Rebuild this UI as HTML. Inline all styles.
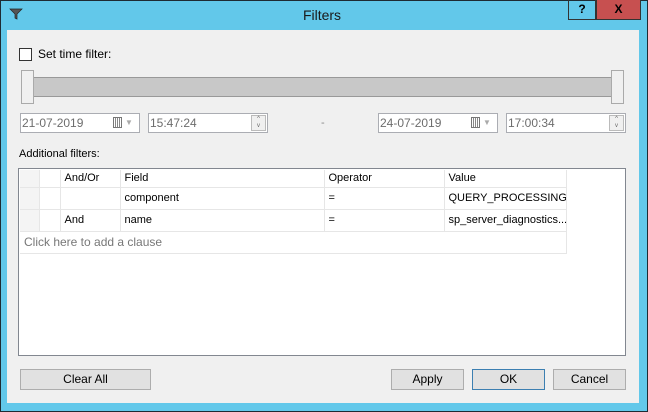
<!DOCTYPE html>
<html><head><style>
*{box-sizing:border-box;margin:0;padding:0}
body{width:648px;height:412px;overflow:hidden;background:#62c8ea;font-family:"Liberation Sans",sans-serif;font-size:11px;color:#000;position:relative}
.a{position:absolute}
.frame{left:0;top:0;width:648px;height:412px;border:1px solid #1e2b33}
.client{left:7px;top:30px;width:632px;height:373px;background:#f0f0f0}
.inp{background:#fff;border:1px solid #abadb3;height:20px;color:#6d6d6d;font-size:12px;line-height:18px;padding-left:1px}
.btn{background:#e1e1e1;border:1px solid #adadad;height:21px;text-align:center;line-height:19px;font-size:12px}
td{border-right:1px solid #e6e6e6;border-bottom:1px solid #e6e6e6;height:22px;line-height:20px;padding:0 0 0 4px;font-size:11px;white-space:nowrap;overflow:hidden}
tr.h td{height:17px;line-height:15px}
table{border-collapse:collapse;table-layout:fixed}
.cal{position:absolute;left:92px;top:3px;width:9px;height:11px;border:1px solid #777;background:repeating-linear-gradient(90deg,#fff 0 1px,#888 1px 2px)}
.arr{position:absolute;left:104px;top:0;color:#aaa;font-size:8px}
.spin{position:absolute;right:1px;top:1px;width:15px;height:16px;border:1px solid #bbb;background:#f0f0f0;font-size:6px;line-height:7px;text-align:center;color:#666}
</style></head><body>
<div class="a frame"></div>
<svg class="a" style="left:9px;top:8px" width="14" height="12" viewBox="0 0 14 12"><path d="M1 1H13L8 6V11L6 10V6Z" fill="#555" stroke="#222" stroke-width="0.7"/></svg>
<div class="a" style="left:-2px;top:7px;width:648px;text-align:center;font-size:14px;color:#1a1a1a">Filters</div>
<div class="a" style="left:568px;top:0;width:28px;height:20px;border:1px solid #333;border-top:none;text-align:center;font-weight:bold;font-size:12px;line-height:19px">?</div>
<div class="a" style="left:596px;top:0;width:45px;height:20px;background:#c75050;border:1px solid #333;border-top:none;text-align:center;font-weight:bold;font-size:12px;line-height:19px">X</div>
<div class="a client"></div>
<div class="a" style="left:19px;top:48px;width:13px;height:13px;background:#fff;border:1px solid #333"></div>
<div class="a" style="left:38px;top:47px;font-size:12px">Set time filter:</div>
<div class="a" style="left:34px;top:77px;width:578px;height:20px;background:#c8c8c8;border-top:1px solid #999;border-bottom:1px solid #999"></div>
<div class="a" style="left:21px;top:70px;width:13px;height:34px;background:#f0f0f0;border:1px solid #aaa"></div>
<div class="a" style="left:611px;top:70px;width:13px;height:34px;background:#f0f0f0;border:1px solid #aaa"></div>
<div class="a inp" style="left:20px;top:113px;width:120px">21-07-2019<span class="cal"></span><span class="arr">▼</span></div>
<div class="a inp" style="left:148px;top:113px;width:120px">15:47:24<span class="spin">^<br>v</span></div>
<div class="a" style="left:321px;top:117px;color:#888">-</div>
<div class="a inp" style="left:378px;top:113px;width:120px">24-07-2019<span class="cal"></span><span class="arr">▼</span></div>
<div class="a inp" style="left:506px;top:113px;width:120px">17:00:34<span class="spin">^<br>v</span></div>
<div class="a" style="left:19px;top:148px;font-size:11px">Additional filters:</div>
<div class="a" style="left:18px;top:168px;width:608px;height:188px;background:#fff;border:1px solid #828790">
<table style="margin:1px 0 0 1px;width:546px">
<colgroup><col style="width:19px"><col style="width:21px"><col style="width:60px"><col style="width:204px"><col style="width:120px"><col style="width:122px"></colgroup>
<tr class="h"><td style="background:#f4f4f4"></td><td></td><td>And/Or</td><td>Field</td><td>Operator</td><td>Value</td></tr>
<tr><td style="background:#f4f4f4"></td><td></td><td></td><td>component</td><td>=</td><td>QUERY_PROCESSING</td></tr>
<tr><td style="background:#f4f4f4"></td><td></td><td>And</td><td>name</td><td>=</td><td>sp_server_diagnostics...</td></tr>
<tr><td colspan="6" style="color:#777;font-size:12px">Click here to add a clause</td></tr>
</table></div>
<div class="a btn" style="left:20px;top:369px;width:131px">Clear All</div>
<div class="a btn" style="left:391px;top:369px;width:73px">Apply</div>
<div class="a btn" style="left:472px;top:369px;width:73px;border-color:#3c7fb1">OK</div>
<div class="a btn" style="left:553px;top:369px;width:73px">Cancel</div>
</body></html>
